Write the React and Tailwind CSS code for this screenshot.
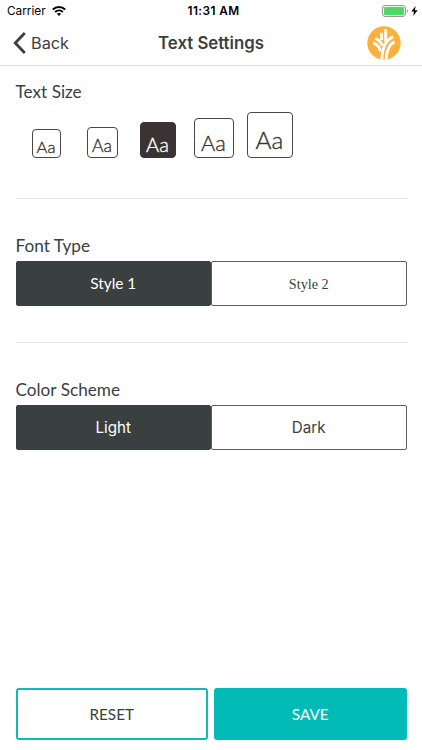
import React, { useState } from 'react'

const SIZES = [
  { id: 'xs', box: 'w-[29px] h-[29px] ml-4', text: 'text-[16.5px] leading-[16px] pb-[2px]' },
  { id: 'sm', box: 'w-[31px] h-[31px] ml-[26px]', text: 'text-[17.5px] leading-[17px] pb-[3px]' },
  { id: 'md', box: 'w-9 h-9 ml-[22px]', text: 'text-[20px] leading-[19px] pb-[3px]' },
  { id: 'lg', box: 'w-10 h-10 ml-[18px]', text: 'text-[21.8px] leading-[21px] pb-[4px]' },
  { id: 'xl', box: 'w-[46px] h-[46px] ml-[13px]', text: 'text-[24.4px] leading-[23px] pb-[6px]' },
]

function StatusBar() {
  return (
    <div className="h-[22px] grid grid-cols-3 items-center pt-px pl-[7px] pr-[4px] text-black font-['Inter',sans-serif]">
      <div className="flex items-center gap-[6px] text-[11.8px]">
        <span>Carrier</span>
        <svg className="mb-px" width="14" height="10" viewBox="0 0 14 10" fill="none" stroke="#000" strokeWidth="2">
          <path d="M0.8 3.6 C4.4 0.2 9.6 0.2 13.2 3.6" />
          <path d="M3.1 6 C5.4 3.9 8.6 3.9 10.9 6" />
          <path d="M7 10 L4.9 7.8 C6.1 6.8 7.9 6.8 9.1 7.8 Z" fill="#000" stroke="none" />
        </svg>
      </div>
      <div className="text-center text-[11.8px] font-semibold tracking-[0.4px] whitespace-nowrap pl-[2px]">11:31 AM</div>
      <div className="flex items-center justify-end mb-px">
        <svg width="27" height="12" viewBox="0 0 27 12">
          <rect x="0.6" y="0.6" width="22.8" height="10.8" rx="2.4" fill="#fff" stroke="#8e8e8e" />
          <rect x="2" y="2" width="20" height="8" rx="1.2" fill="#4cd964" />
          <path d="M24.8 4 C26.2 4.6 26.2 7.4 24.8 8 Z" fill="#8e8e8e" />
        </svg>
        <svg className="ml-[2px]" width="7" height="10" viewBox="0 0 7 10">
          <path d="M4.6 0 L0.3 5.6 H3 L2.2 10 L6.7 4.2 H3.9 Z" fill="#000" />
        </svg>
      </div>
    </div>
  )
}

function Logo() {
  return (
    <svg width="34" height="34" viewBox="0 0 34 34">
      <defs>
        <clipPath id="disc">
          <circle cx="17" cy="17" r="16.7" />
        </clipPath>
      </defs>
      <circle cx="17" cy="17" r="16.7" fill="#fdb03c" />
      <g clipPath="url(#disc)" fill="none" stroke="#fff" strokeWidth="2.9">
        <path d="M18.7 3 V16" />
        <path d="M14.6 6.8 V14" />
        <path d="M8 12.4 C11.8 13.8 14.2 16 15.4 19.6" />
        <path d="M6 16.8 C10.4 18.2 12.8 20.6 13.4 25.4" />
        <path d="M26 10.6 C18.8 14.4 15.4 20.5 14.8 34" />
        <path d="M27.4 15.6 C21.8 18.6 19.4 24 19.1 34" />
      </g>
    </svg>
  )
}

function Header() {
  return (
    <header className="h-11 grid grid-cols-[1fr_auto_1fr] items-center border-b border-[#dfdfdf] px-[13px] font-['Inter',sans-serif] text-[#3b3f40]">
      <button className="flex items-center gap-[5px] text-[16.3px]">
        <svg className="mb-px" width="13" height="22" viewBox="0 0 13 22" fill="none" stroke="#3b3f40" strokeWidth="2.8">
          <path d="M11.8 1 L2.2 11 L11.8 21" />
        </svg>
        Back
      </button>
      <h1 className="text-[16.8px] font-semibold">Text Settings</h1>
      <div className="flex justify-end pr-2 pb-[2px]">
        <Logo />
      </div>
    </header>
  )
}

function Toggle({ options, value, onChange }) {
  return (
    <div className="flex h-[45px]">
      {options.map(option => (
        <button
          key={option.label}
          onClick={() => onChange(option.label)}
          className={`flex-1 border rounded-[2px] ${option.font} ${
            value === option.label
              ? 'bg-[#3a3f3f] border-[#3a3f3f] text-white'
              : 'bg-white border-[#5c6061] text-[#3a3f3f]'
          }`}
        >
          {option.label}
        </button>
      ))}
    </div>
  )
}

export default function App() {
  const [size, setSize] = useState('md')
  const [style, setStyle] = useState('Style 1')
  const [scheme, setScheme] = useState('Light')

  return (
    <div className="w-[422px] h-[750px] flex flex-col bg-white overflow-hidden font-['Lato',sans-serif] text-[#3a3f3f]">
      <StatusBar />
      <Header />

      <main className="flex-1 px-[15.5px]">
        {/* Text size */}
        <section className="h-[133px] pt-[14px] border-b border-[#e2e2e2]">
          <h2 className="text-[17.2px] leading-[24px]">Text Size</h2>
          <div className="flex items-end h-[54px]">
            {SIZES.map(item => (
              <button
                key={item.id}
                onClick={() => setSize(item.id)}
                className={`flex shrink-0 items-end justify-center border rounded-[4px] font-light [-webkit-text-stroke:0.35px] ${item.box} ${item.text} ${
                  size === item.id
                    ? 'bg-[#393433] border-[#393433] text-white'
                    : 'bg-white border-[#4a4646] text-[#393433]'
                }`}
              >
                Aa
              </button>
            ))}
          </div>
        </section>

        {/* Font type */}
        <section className="h-[144px] pt-[35px] border-b border-[#e2e2e2]">
          <h2 className="text-[17.2px] leading-[24px] mb-[3px]">Font Type</h2>
          <Toggle
            options={[
              { label: 'Style 1', font: 'text-[15.4px] pt-px' },
              { label: 'Style 2', font: "text-[14.2px] pt-[2px] font-['Liberation_Serif',serif]" },
            ]}
            value={style}
            onChange={setStyle}
          />
        </section>

        {/* Color scheme */}
        <section className="pt-[35px]">
          <h2 className="text-[17.2px] leading-[24px] mb-[3px]">Color Scheme</h2>
          <Toggle
            options={[
              { label: 'Light', font: "text-[15.2px] pt-px font-['Inter',sans-serif]" },
              { label: 'Dark', font: "text-[15.2px] pt-px font-['Inter',sans-serif]" },
            ]}
            value={scheme}
            onChange={setScheme}
          />
        </section>
      </main>

      <footer className="flex gap-[6px] px-[15.5px] pb-[10px] h-[62px]">
        <button className="flex-1 border-2 border-[#13bab5] rounded-[3px] text-[15.3px] pt-px">RESET</button>
        <button className="flex-1 border-2 border-[#02bbb6] bg-[#02bbb6] rounded-[3px] text-[15.3px] pt-px text-white">SAVE</button>
      </footer>
    </div>
  )
}
